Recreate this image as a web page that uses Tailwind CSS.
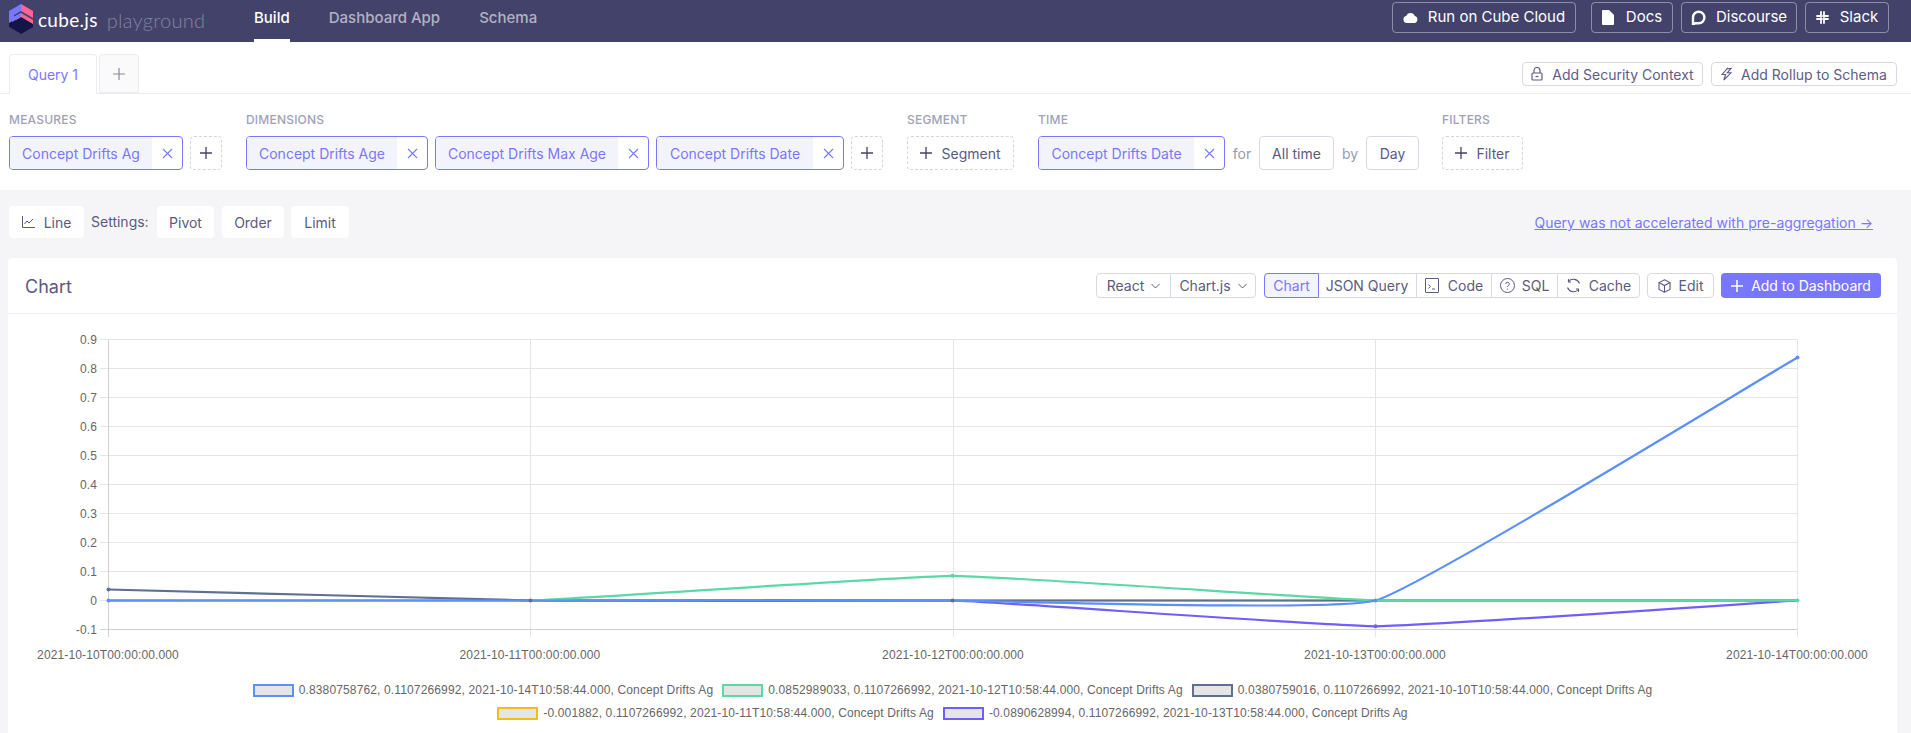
<!doctype html>
<html lang="en">
<head>
<meta charset="utf-8">
<title>Cube.js Playground</title>
<script src="https://cdn.jsdelivr.net/npm/@tailwindcss/browser@4"></script>
</head>
<body class="bg-[#f5f5f8] font-['Inter','Liberation_Sans',sans-serif] text-[14px] text-[#5a5a80] h-[733px] overflow-hidden">

<!-- top nav -->
<header class="h-[42px] bg-[#43426b] flex items-start pl-[8px]">
  <div class="flex items-center h-[42px] w-[246px] shrink-0 -mt-[1px]">
    <svg width="26" height="34" viewBox="0 0 26 34" class="mr-[4px] -mt-[1px]">
      <path d="M13 1 L25 8 V15 L13 8 Z" fill="#ff6492"/>
      <path d="M13 1 L1 8 V24 L13 31 L13 24 L6 20 V12 L13 8 Z" fill="#7a77ff"/>
      <path d="M13 13 L25 20 V24 L13 31 L1 24 V20 Z" fill="#141446"/>
      <path d="M13 10 L25 17 V21 L13 14 L8 17 L4 15 Z" fill="#ff6492"/>
      <path d="M13 14 L4 19 V15 L13 10 Z" fill="#7a77ff"/>
    </svg>
    <span class="font-['Lato',sans-serif] text-[19px] text-white mr-[9px] tracking-[0.3px]">cube.js</span>
    <span class="font-['Lato',sans-serif] font-light text-[20px] text-white/35 tracking-[0.3px]">playground</span>
  </div>
  <nav class="flex gap-[39px] h-[42px] text-[15px] font-medium">
    <a class="h-[42px] leading-[36px] text-white border-b-[3px] border-white">Build</a>
    <a class="leading-[36px] text-white/60">Dashboard App</a>
    <a class="leading-[36px] text-white/60">Schema</a>
  </nav>
  <div class="ml-auto flex pt-[2px] pr-[22px] text-white text-[15px]">
    <a class="h-[31px] w-[184px] mr-[15px] flex items-center justify-center gap-[10px] border border-white/40 rounded-[4px]">
      <svg width="15" height="11" viewBox="0 0 15 11"><path d="M4 11a3.6 3.6 0 0 1-.8-7.1A4.6 4.6 0 0 1 11.8 4 3.6 3.6 0 0 1 11.4 11Z" fill="#fff"/></svg>
      Run on Cube Cloud</a>
    <a class="h-[31px] w-[82px] mr-[8px] flex items-center justify-center gap-[12px] border border-white/40 rounded-[4px]">
      <svg width="12" height="15" viewBox="0 0 12 15"><path d="M0 1a1 1 0 0 1 1-1h6l5 5v9a1 1 0 0 1-1 1H1a1 1 0 0 1-1-1Z" fill="#fff"/></svg>
      Docs</a>
    <a class="h-[31px] w-[116px] mr-[8px] flex items-center justify-center gap-[10px] border border-white/40 rounded-[4px]">
      <svg width="15" height="15" viewBox="0 0 15 15"><path d="M2 14.5 V7.5 A5.7 5.7 0 1 1 7.7 13.2 H4.5 Z" fill="none" stroke="#fff" stroke-width="2.4"/></svg>
      Discourse</a>
    <a class="h-[31px] w-[84px] flex items-center justify-center gap-[11px] border border-white/40 rounded-[4px]">
      <svg width="13" height="13" viewBox="0 0 13 13" stroke="#fff" stroke-width="1.8" stroke-linecap="round"><path d="M5 1v5M8 7v5M1 8h5M7 5h5"/><path d="M8 1v3M5 9v3M1 5h3M9 8h3"/></svg>
      Slack</a>
  </div>
</header>

<!-- query tabs -->
<div class="bg-white h-[52px] flex items-end border-b border-[#ececf0] pl-[9px] relative">
  <div class="h-[40px] w-[88px] bg-white border border-b-0 border-[#ececf0] rounded-t-[4px] flex items-center justify-center text-[#7a77ff] -mb-[1px]">Query 1</div>
  <div class="h-[39px] w-[40px] ml-[2px] bg-[#fafafa] border border-[#ececf0] rounded-t-[4px] flex items-center justify-center">
    <svg width="12" height="12" viewBox="0 0 12 12" stroke="#8a8aa0" stroke-width="1.2"><path d="M6 0v12M0 6h12"/></svg>
  </div>
  <div class="ml-auto flex gap-[8px] self-start pt-[20px] pr-[14px] text-[#5d5d85]">
    <a class="h-[24px] w-[181px] flex items-center justify-center gap-[9px] border border-[#d9d9e6] rounded-[4px]">
      <svg width="12" height="14" viewBox="0 0 12 14" fill="none" stroke="#5d5d85" stroke-width="1.2"><rect x="1" y="6" width="10" height="7" rx="1"/><path d="M3 6V3.5a3 3 0 0 1 6 0V6"/><path d="M4.5 9.5h3"/></svg>
      Add Security Context</a>
    <a class="h-[24px] w-[186px] flex items-center justify-center gap-[9px] border border-[#d9d9e6] rounded-[4px]">
      <svg width="11" height="14" viewBox="0 0 11 14" fill="none" stroke="#5d5d85" stroke-width="1.1"><path d="M7 .8 1 7.5h3.6L2.8 13 10 5.8H6.2L10 1.5 5 2"/></svg>
      Add Rollup to Schema</a>
  </div>
</div>

<!-- query builder -->
<div class="bg-white h-[96px] flex pl-[9px] pt-[17px]">
  <div class="w-[237px]">
    <div class="h-[25px] text-[12px] font-medium tracking-[0.2px] text-[#a1a1b5]">MEASURES</div>
    <div class="flex gap-[7px]">
      <div class="w-[174px] h-[34px] flex border border-[#7a77ff] rounded-[4px] overflow-hidden text-[#7a77ff]">
        <span class="w-[142px] bg-[#f3f3fb] flex items-center justify-center whitespace-nowrap">Concept Drifts Ag</span>
        <span class="flex-1 flex items-center justify-center"><svg width="11" height="11" viewBox="0 0 11 11" stroke="#7a77ff" stroke-width="1.1"><path d="M1 1l9 9M10 1l-9 9"/></svg></span>
      </div>
      <div class="w-[32px] h-[34px] flex items-center justify-center border border-dashed border-[#d5d5dd] rounded-[4px]">
        <svg width="12" height="12" viewBox="0 0 12 12" stroke="#43436b" stroke-width="1.3"><path d="M6 0v12M0 6h12"/></svg>
      </div>
    </div>
  </div>
  <div class="w-[661px]">
    <div class="h-[25px] text-[12px] font-medium tracking-[0.2px] text-[#a1a1b5]">DIMENSIONS</div>
    <div class="flex gap-[7px]">
      <div class="w-[182px] h-[34px] flex border border-[#7a77ff] rounded-[4px] overflow-hidden text-[#7a77ff]">
        <span class="w-[150px] bg-[#f3f3fb] flex items-center justify-center whitespace-nowrap">Concept Drifts Age</span>
        <span class="flex-1 flex items-center justify-center"><svg width="11" height="11" viewBox="0 0 11 11" stroke="#7a77ff" stroke-width="1.1"><path d="M1 1l9 9M10 1l-9 9"/></svg></span>
      </div>
      <div class="w-[214px] h-[34px] flex border border-[#7a77ff] rounded-[4px] overflow-hidden text-[#7a77ff]">
        <span class="w-[182px] bg-[#f3f3fb] flex items-center justify-center whitespace-nowrap">Concept Drifts Max Age</span>
        <span class="flex-1 flex items-center justify-center"><svg width="11" height="11" viewBox="0 0 11 11" stroke="#7a77ff" stroke-width="1.1"><path d="M1 1l9 9M10 1l-9 9"/></svg></span>
      </div>
      <div class="w-[188px] h-[34px] flex border border-[#7a77ff] rounded-[4px] overflow-hidden text-[#7a77ff]">
        <span class="w-[156px] bg-[#f3f3fb] flex items-center justify-center whitespace-nowrap">Concept Drifts Date</span>
        <span class="flex-1 flex items-center justify-center"><svg width="11" height="11" viewBox="0 0 11 11" stroke="#7a77ff" stroke-width="1.1"><path d="M1 1l9 9M10 1l-9 9"/></svg></span>
      </div>
      <div class="w-[32px] h-[34px] flex items-center justify-center border border-dashed border-[#d5d5dd] rounded-[4px]">
        <svg width="12" height="12" viewBox="0 0 12 12" stroke="#43436b" stroke-width="1.3"><path d="M6 0v12M0 6h12"/></svg>
      </div>
    </div>
  </div>
  <div class="w-[131px]">
    <div class="h-[25px] text-[12px] font-medium tracking-[0.2px] text-[#a1a1b5]">SEGMENT</div>
    <div class="w-[107px] h-[34px] flex items-center justify-center gap-[9px] border border-dashed border-[#d5d5dd] rounded-[4px]">
      <svg width="12" height="12" viewBox="0 0 12 12" stroke="#43436b" stroke-width="1.3"><path d="M6 0v12M0 6h12"/></svg>
      Segment
    </div>
  </div>
  <div class="w-[404px]">
    <div class="h-[25px] text-[12px] font-medium tracking-[0.2px] text-[#a1a1b5]">TIME</div>
    <div class="flex items-center">
      <div class="w-[187px] h-[34px] flex border border-[#7a77ff] rounded-[4px] overflow-hidden text-[#7a77ff]">
        <span class="w-[155px] bg-[#f3f3fb] flex items-center justify-center whitespace-nowrap">Concept Drifts Date</span>
        <span class="flex-1 flex items-center justify-center"><svg width="11" height="11" viewBox="0 0 11 11" stroke="#7a77ff" stroke-width="1.1"><path d="M1 1l9 9M10 1l-9 9"/></svg></span>
      </div>
      <span class="w-[34px] text-center text-[#9a9ab0]">for</span>
      <div class="w-[75px] h-[34px] flex items-center justify-center border border-[#d9d9e6] rounded-[4px]">All time</div>
      <span class="w-[32px] text-center text-[#9a9ab0]">by</span>
      <div class="w-[53px] h-[34px] flex items-center justify-center border border-[#d9d9e6] rounded-[4px]">Day</div>
    </div>
  </div>
  <div>
    <div class="h-[25px] text-[12px] font-medium tracking-[0.2px] text-[#a1a1b5]">FILTERS</div>
    <div class="w-[81px] h-[34px] flex items-center justify-center gap-[9px] border border-dashed border-[#d5d5dd] rounded-[4px]">
      <svg width="12" height="12" viewBox="0 0 12 12" stroke="#43436b" stroke-width="1.3"><path d="M6 0v12M0 6h12"/></svg>
      Filter
    </div>
  </div>
</div>

<!-- settings row -->
<div class="h-[68px] flex items-start pt-[16px] pl-[9px] pr-[38px]">
  <a class="h-[32px] w-[75px] bg-white rounded-[4px] flex items-center justify-center gap-[9px]">
    <svg width="13" height="12" viewBox="0 0 13 12" fill="none" stroke="#5a5a80" stroke-width="1"><path d="M.5 0v11.5H13"/><path d="M2.5 8 5 5l2 2 4-4"/></svg>
    Line</a>
  <span class="w-[73px] h-[32px] leading-[32px] pl-[7px]">Settings:</span>
  <a class="h-[32px] w-[57px] bg-white rounded-[4px] flex items-center justify-center">Pivot</a>
  <a class="h-[32px] w-[62px] ml-[8px] bg-white rounded-[4px] flex items-center justify-center">Order</a>
  <a class="h-[32px] w-[58px] ml-[7px] bg-white rounded-[4px] flex items-center justify-center">Limit</a>
  <a class="ml-auto h-[32px] leading-[33px] text-[#7a77ff]"><span class="underline">Query was not accelerated with pre-aggregation →</span></a>
</div>

<!-- chart card -->
<section class="bg-white ml-[8px] mr-[14px] rounded-t-[4px] h-[475px]">
  <div class="h-[56px] flex items-center border-b border-[#eeeefb] pl-[17px] pr-[16px]">
    <h2 class="text-[18px] pt-[2px]">Chart</h2>
    <div class="ml-auto flex items-center h-[25px]">
      <div class="flex h-[25px] border border-[#d9d9e6] rounded-[4px] mr-[8px]">
        <span class="w-[74px] flex items-center justify-center gap-[7px] border-r border-[#d9d9e6]">React
          <svg width="9" height="6" viewBox="0 0 9 6" fill="none" stroke="#5a5a80"><path d="M.5 1l4 4 4-4"/></svg></span>
        <span class="w-[84px] flex items-center justify-center gap-[7px]">Chart.js
          <svg width="9" height="6" viewBox="0 0 9 6" fill="none" stroke="#5a5a80"><path d="M.5 1l4 4 4-4"/></svg></span>
      </div>
      <div class="flex h-[25px] border border-[#d9d9e6] rounded-[4px] mr-[7px]">
        <span class="w-[55px] -m-[1px] flex items-center justify-center bg-[#f3f3fb] text-[#7a77ff] border border-[#7a77ff] rounded-l-[4px] h-[25px]">Chart</span>
        <span class="w-[99px] flex items-center justify-center border-r border-[#d9d9e6]">JSON Query</span>
        <span class="w-[75px] flex items-center justify-center gap-[9px] border-r border-[#d9d9e6]">
          <svg width="14" height="15" viewBox="0 0 14 15" fill="none" stroke="#5a5a80"><rect x=".5" y=".5" width="13" height="14" rx=".5"/><path d="M3.500 6.500l2 2-2 2M7 11h3"/></svg>Code</span>
        <span class="w-[66px] flex items-center justify-center gap-[7px] border-r border-[#d9d9e6]">
          <svg width="15" height="15" viewBox="0 0 15 15" fill="none" stroke="#5a5a80"><circle cx="7.500" cy="7.500" r="7"/><path d="M5.700 6a1.800 1.800 0 1 1 2.600 1.700c-.6.300-.8.700-.8 1.300"/><path d="M7.500 10.500v1"/></svg>SQL</span>
        <span class="w-[81px] flex items-center justify-center gap-[8px]">
          <svg width="15" height="15" viewBox="0 0 15 15" fill="none" stroke="#5a5a80" stroke-width="1.100"><path d="M13.500 5.500A6.500 6.500 0 0 0 2.500 3.500M1.500 9.500A6.500 6.500 0 0 0 12.500 11.500"/><path d="M2.500 1v3h2.500M12.500 14v-3H10"/></svg>Cache</span>
      </div>
      <div class="w-[67px] h-[25px] flex items-center justify-center gap-[8px] border border-[#d9d9e6] rounded-[4px] mr-[7px]">
        <svg width="13" height="14" viewBox="0 0 13 14" fill="none" stroke="#5a5a80" stroke-width="1.100"><path d="M6.500 .8 12 3.500v7L6.500 13.200 1 10.500v-7Z"/><path d="M1 3.500 6.500 6.500 12 3.500M6.500 6.500v6.700"/></svg>Edit</div>
      <div class="w-[160px] h-[25px] flex items-center justify-center gap-[8px] bg-[#7a77ff] text-white rounded-[4px]">
        <svg width="12" height="12" viewBox="0 0 12 12" stroke="#fff" stroke-width="1.500"><path d="M6 0v12M0 6h12"/></svg>Add to Dashboard</div>
    </div>
  </div>

  <!-- chart.js canvas stand-in, page coordinates via viewBox; 0 sits at y=600.5, each 0.1 is 29px -->
  <svg width="1889" height="355" viewBox="8 314 1889 355" class="block font-['Liberation_Sans',sans-serif] tracking-[0.13px]" fill="#666" font-size="12">
    <g stroke="#e5e5e5" fill="none">
      <path d="M100 339.500H1797.500M100 368.500H1797.500M100 397.500H1797.500M100 426.500H1797.500M100 455.500H1797.500M100 484.500H1797.500M100 513.500H1797.500M100 542.500H1797.500M100 571.500H1797.500M100 600.500H1797.500"/>
      <path d="M530.500 339.500V637M953.500 339.500V637M1375.500 339.500V637M1797.500 339.500V637"/>
    </g>
    <path d="M100 629.500H1797.500M108.500 339.500V637" stroke="#d0d0d0" fill="none"/>
    <g text-anchor="end">
      <text x="97" y="343.500">0.9</text><text x="97" y="372.500">0.8</text><text x="97" y="401.500">0.7</text>
      <text x="97" y="430.500">0.6</text><text x="97" y="459.500">0.5</text><text x="97" y="488.500">0.4</text>
      <text x="97" y="517.500">0.3</text><text x="97" y="546.500">0.2</text><text x="97" y="575.500">0.1</text>
      <text x="97" y="604.500">0</text><text x="97" y="633.500">-0.1</text>
    </g>
    <g text-anchor="middle">
      <text x="108" y="659">2021-10-10T00:00:00.000</text>
      <text x="530" y="659">2021-10-11T00:00:00.000</text>
      <text x="953" y="659">2021-10-12T00:00:00.000</text>
      <text x="1375" y="659">2021-10-13T00:00:00.000</text>
      <text x="1797" y="659">2021-10-14T00:00:00.000</text>
    </g>
    <g fill="none" stroke-width="2.200">
      <path stroke="#6f5ef9" d="M108.500 600.500H530.500C572.700 600.500 910.300 599.200 952.500 600.500C994.700 601.800 1333.300 626.300 1375.500 626.300C1417.700 626.300 1755.300 603.100 1797.500 600.500"/>
      <path stroke="#f6bd16" d="M108.500 600.500L530.500 601L952.500 600.500H1797.500"/>
      <path stroke="#5d7092" d="M108.500 589.500C150.700 590.600 488.300 599.400 530.500 600.500C572.700 601.600 910.300 600.500 952.500 600.500H1797.500"/>
      <path stroke="#5ad8a6" d="M530.500 600.500C572.700 599.300 910.300 575.800 952.500 575.800C994.700 575.800 1333.300 599.300 1375.500 600.500"/>
      <path stroke="#5b8ff9" d="M108.500 600.500H952.500C994.700 600.500 1336.300 611.800 1375.500 600.500C1420.800 587.500 1755.300 381.800 1797.500 357.500"/>
      <path stroke="#5ad8a6" d="M1375.500 600.500H1797.500"/>
    </g>
    <g>
      <circle cx="108.500" cy="589.500" r="2" fill="#5d7092"/><circle cx="108.500" cy="600.500" r="2" fill="#5b8ff9"/>
      <circle cx="530.500" cy="600.500" r="2" fill="#5d7092"/>
      <circle cx="952.500" cy="575.800" r="2" fill="#5ad8a6"/><circle cx="952.500" cy="600.500" r="2" fill="#5d7092"/>
      <circle cx="1375.500" cy="626.300" r="2" fill="#6f5ef9"/><circle cx="1375.500" cy="600.500" r="2" fill="#5b8ff9"/>
      <circle cx="1797.500" cy="357.500" r="2" fill="#5b8ff9"/><circle cx="1797.500" cy="600.500" r="2" fill="#5ad8a6"/>
    </g>
  </svg>

  <!-- legend -->
  <div class="font-['Liberation_Sans',sans-serif] text-[12px] tracking-[0.14px] text-[#666] flex flex-col items-center gap-[10px] pt-[15px] leading-[13px]">
    <div class="flex gap-[9px]">
      <span class="flex items-center gap-[5px] whitespace-nowrap"><i class="block w-[41px] h-[13px] bg-[#e5e5e5] border-2 border-[#5b8ff9]"></i>0.8380758762, 0.1107266992, 2021-10-14T10:58:44.000, Concept Drifts Ag</span>
      <span class="flex items-center gap-[5px] whitespace-nowrap"><i class="block w-[41px] h-[13px] bg-[#e5e5e5] border-2 border-[#5ad8a6]"></i>0.0852989033, 0.1107266992, 2021-10-12T10:58:44.000, Concept Drifts Ag</span>
      <span class="flex items-center gap-[5px] whitespace-nowrap"><i class="block w-[41px] h-[13px] bg-[#e5e5e5] border-2 border-[#5d7092]"></i>0.0380759016, 0.1107266992, 2021-10-10T10:58:44.000, Concept Drifts Ag</span>
    </div>
    <div class="flex gap-[9px]">
      <span class="flex items-center gap-[5px] whitespace-nowrap"><i class="block w-[41px] h-[13px] bg-[#e5e5e5] border-2 border-[#f6bd16]"></i>-0.001882, 0.1107266992, 2021-10-11T10:58:44.000, Concept Drifts Ag</span>
      <span class="flex items-center gap-[5px] whitespace-nowrap"><i class="block w-[41px] h-[13px] bg-[#e5e5e5] border-2 border-[#6f5ef9]"></i>-0.0890628994, 0.1107266992, 2021-10-13T10:58:44.000, Concept Drifts Ag</span>
    </div>
  </div>
</section>
</body>
</html>
